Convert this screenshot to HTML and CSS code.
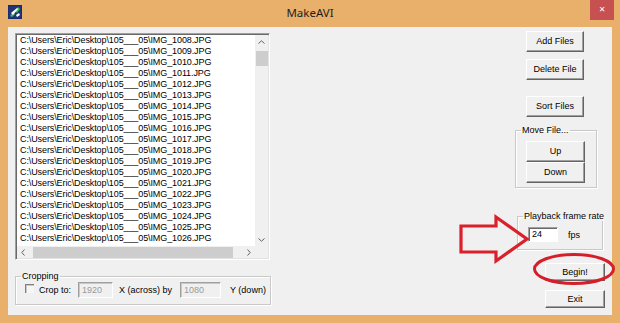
FILE: index.html
```html
<!DOCTYPE html>
<html>
<head>
<meta charset="utf-8">
<title>MakeAVI</title>
<link rel="stylesheet" href="styles.css">
</head>
<body>
<div class="window">
  <div class="titlebar">
    <svg class="app-icon" viewBox="0 0 14 14" width="14" height="14">
      <rect x="0" y="0" width="14" height="14" fill="#1c2a6e"/>
      <rect x="1" y="1" width="12" height="12" fill="#22337e"/>
      <path d="M2 11 L5 7 L7 9 L4 12 Z" fill="#3fbf4a"/>
      <path d="M7 6 L10 2 L12 4 L9 8 Z" fill="#3fbf4a"/>
      <path d="M3 8 L9 3 L10 4 L5 10 Z" fill="#ffffff"/>
      <path d="M8 10 L11 8 L12 10 L9 12 Z" fill="#ffffff"/>
    </svg>
    <div class="title">MakeAVI</div>
    <div class="close">&#x2715;</div>
  </div>
  <div class="client">
    <div class="left">
      <div class="listbox">
        <div class="list">
          <div class="row">C:\Users\Eric\Desktop\105___05\IMG_1008.JPG</div>
          <div class="row">C:\Users\Eric\Desktop\105___05\IMG_1009.JPG</div>
          <div class="row">C:\Users\Eric\Desktop\105___05\IMG_1010.JPG</div>
          <div class="row">C:\Users\Eric\Desktop\105___05\IMG_1011.JPG</div>
          <div class="row">C:\Users\Eric\Desktop\105___05\IMG_1012.JPG</div>
          <div class="row">C:\Users\Eric\Desktop\105___05\IMG_1013.JPG</div>
          <div class="row">C:\Users\Eric\Desktop\105___05\IMG_1014.JPG</div>
          <div class="row">C:\Users\Eric\Desktop\105___05\IMG_1015.JPG</div>
          <div class="row">C:\Users\Eric\Desktop\105___05\IMG_1016.JPG</div>
          <div class="row">C:\Users\Eric\Desktop\105___05\IMG_1017.JPG</div>
          <div class="row">C:\Users\Eric\Desktop\105___05\IMG_1018.JPG</div>
          <div class="row">C:\Users\Eric\Desktop\105___05\IMG_1019.JPG</div>
          <div class="row">C:\Users\Eric\Desktop\105___05\IMG_1020.JPG</div>
          <div class="row">C:\Users\Eric\Desktop\105___05\IMG_1021.JPG</div>
          <div class="row">C:\Users\Eric\Desktop\105___05\IMG_1022.JPG</div>
          <div class="row">C:\Users\Eric\Desktop\105___05\IMG_1023.JPG</div>
          <div class="row">C:\Users\Eric\Desktop\105___05\IMG_1024.JPG</div>
          <div class="row">C:\Users\Eric\Desktop\105___05\IMG_1025.JPG</div>
          <div class="row">C:\Users\Eric\Desktop\105___05\IMG_1026.JPG</div>
        </div>
        <div class="vscroll">
          <svg class="arrow" viewBox="0 0 7 4" width="7" height="4"><path d="M0.5 3.5 L3.5 0.8 L6.5 3.5" fill="none" stroke="#606060" stroke-width="1"/></svg>
          <div class="vthumb"></div>
          <div class="spacer"></div>
          <svg class="arrow" viewBox="0 0 7 4" width="7" height="4"><path d="M0.5 0.5 L3.5 3.2 L6.5 0.5" fill="none" stroke="#606060" stroke-width="1"/></svg>
        </div>
        <div class="hscroll">
          <svg class="arrow" viewBox="0 0 4 7" width="4" height="7"><path d="M3.5 0.5 L0.8 3.5 L3.5 6.5" fill="none" stroke="#606060" stroke-width="1"/></svg>
          <div class="hthumb"></div>
          <svg class="arrow" viewBox="0 0 4 7" width="4" height="7"><path d="M0.5 0.5 L3.2 3.5 L0.5 6.5" fill="none" stroke="#606060" stroke-width="1"/></svg>
        </div>
        <div class="corner"></div>
      </div>
      <fieldset class="group crop">
        <legend>Cropping</legend>
        <div class="crop-row">
          <span class="check"></span>
          <span class="lbl-crop">Crop to:</span>
          <span class="field disabled w35">1920</span>
          <span class="lbl-x">X (across) by</span>
          <span class="field disabled w41">1080</span>
          <span class="lbl-y">Y (down)</span>
        </div>
      </fieldset>
    </div>
    <div class="right">
      <div class="btn btn-top">Add Files</div>
      <div class="btn btn-del">Delete File</div>
      <div class="btn btn-sort">Sort Files</div>
      <fieldset class="group move">
        <legend>Move File...</legend>
        <div class="btn btn-move">Up</div>
        <div class="btn btn-move">Down</div>
      </fieldset>
      <fieldset class="group rate">
        <legend>Playback frame rate</legend>
        <div class="rate-row">
          <span class="field w30">24</span>
          <span class="fps">fps</span>
        </div>
      </fieldset>
      <div class="btn btn-small btn-begin">Begin!</div>
      <div class="btn btn-small btn-exit">Exit</div>
    </div>
  </div>
  <svg class="annot" viewBox="0 0 620 323" width="620" height="323">
    <path d="M461 226 L496 226 L496 217 L527 239 L496 261 L496 252 L461 252 Z" fill="none" stroke="#d9202b" stroke-width="3.2" stroke-linejoin="miter"/>
    <ellipse cx="574" cy="269" rx="39.5" ry="14.5" fill="none" stroke="#d41f2a" stroke-width="3"/>
  </svg>
</div>
</body>
</html>
```

FILE: styles.css
```css
html, body {
  margin: 0;
  padding: 0;
}
body {
  width: 620px;
  height: 323px;
  overflow: hidden;
  background: #e8b06a;
  font-family: "Liberation Sans", Arial, sans-serif;
  font-size: 9px;
  color: #000;
}
.window {
  position: relative;
  width: 620px;
  height: 323px;
  background: #e8b06a;
  display: flex;
  flex-direction: column;
}
.titlebar {
  height: 27px;
  display: flex;
  align-items: flex-start;
}
.app-icon {
  margin: 5px 0 0 8px;
  flex: none;
}
.title {
  flex: 1;
  text-align: center;
  padding-left: 8px;
  font-family: "Noto Sans", "Open Sans", sans-serif;
  font-size: 11.5px;
  line-height: 25px;
  color: #1e1e1e;
}
.close {
  width: 24px;
  height: 20px;
  margin-right: 6px;
  background: #c75050;
  color: #fff;
  font-family: "DejaVu Sans", sans-serif;
  font-size: 8px;
  font-weight: bold;
  line-height: 20px;
  text-align: center;
}
.client {
  margin: 0 8px;
  height: 288px;
  background: #f0f0f0;
  display: flex;
  justify-content: space-between;
  padding: 0 7px;
}
.left {
  width: 256px;
  padding-top: 6px;
  display: flex;
  flex-direction: column;
}
.listbox {
  width: 255px;
  height: 227px;
  box-sizing: border-box;
  border: 1px solid;
  border-color: #a0a0a0 #ffffff #ffffff #a0a0a0;
  box-shadow: inset 1px 1px 0 #696969, inset -1px -1px 0 #e3e3e3;
  background: #fff;
  display: grid;
  grid-template-columns: 1fr 13px;
  grid-template-rows: 1fr 12px;
  padding: 1px;
}
.list {
  padding-left: 3px;
  overflow: hidden;
}
.row {
  height: 11px;
  line-height: 11px;
  white-space: nowrap;
  letter-spacing: -0.1px;
}
.vscroll {
  background: #f0f0f0;
  display: flex;
  flex-direction: column;
  align-items: center;
  padding: 5px 0 4px;
}
.vthumb {
  width: 12px;
  height: 15px;
  margin-top: 7px;
  background: #cdcdcd;
}
.spacer {
  flex: 1;
}
.hscroll {
  background: #f0f0f0;
  display: flex;
  align-items: center;
  padding: 0 4px;
}
.hthumb {
  height: 11px;
  width: 200px;
  margin-left: 8px;
  margin-right: auto;
  background: #cdcdcd;
}
.corner {
  background: #f0f0f0;
}
.arrow {
  display: block;
  flex: none;
}
.group {
  margin: 0;
  border: 1px solid #c9c9c9;
  box-shadow: 1px 1px 0 #fff, inset 1px 1px 0 #fff;
  padding: 0;
  min-width: 0;
}
.group legend {
  padding: 0 1px;
  margin-left: 5px;
  line-height: 10px;
  height: 10px;
  white-space: nowrap;
}
.crop {
  margin-top: 11px;
  width: 256px;
  box-sizing: border-box;
  padding: 1px 0 6px 0;
}
.crop-row {
  display: flex;
  align-items: center;
  height: 16px;
  padding-left: 9px;
}
.check {
  width: 9px;
  height: 9px;
  box-sizing: border-box;
  border-top: 1px solid #808080;
  border-left: 1px solid #808080;
  box-shadow: inset 1px 1px 0 #c8c8c8;
  background: #f6f6f6;
  margin-right: 5px;
  margin-top: -3px;
}
.lbl-crop { margin-right: 7px; }
.lbl-x { margin: 0 8px 0 6px; }
.lbl-y { margin-left: 9px; }
.field {
  height: 16px;
  box-sizing: border-box;
  border: 1px solid;
  border-color: #a0a0a0 #ffffff #ffffff #a0a0a0;
  box-shadow: inset 1px 1px 0 #696969;
  background: #fff;
  padding: 2px 0 0 3px;
  line-height: 11px;
}
.field.disabled {
  background: #f0f0f0;
  color: #9a9a9a;
  box-shadow: inset 1px 1px 0 #c8c8c8;
}
.w35 { width: 35px; }
.w41 { width: 41px; }
.w30 { width: 30px; height: 15px; padding-top: 1px; }
.right {
  width: 90px;
  display: flex;
  flex-direction: column;
}
.btn {
  box-sizing: border-box;
  width: 58px;
  height: 21px;
  background: #f0f0f0;
  border: 1px solid;
  border-color: #ffffff #646464 #646464 #ffffff;
  box-shadow: inset -1px -1px 0 #a0a0a0;
  text-align: center;
  line-height: 19px;
  flex: none;
}
.btn-top { margin: 4px 0 0 11px; }
.btn-del { margin: 7px 0 0 11px; }
.btn-sort { margin: 16px 0 0 11px; }
.move {
  margin-top: 8px;
  width: 82px;
  box-sizing: border-box;
  padding: 6px 0 4px 0;
}
.btn-move {
  width: 59px;
  margin-left: 10px;
}
.rate {
  margin: 23px 0 0 2px;
  width: 86px;
  box-sizing: border-box;
  padding: 6px 0 7px 0;
}
.rate-row {
  display: flex;
  align-items: center;
  padding-left: 10px;
}
.fps {
  margin-left: 10px;
}
.btn-small {
  width: 60px;
  height: 18px;
  line-height: 16px;
  margin-left: 30px;
}
.btn-begin { margin-top: 13px; }
.btn-exit { margin-top: 9px; }
.annot {
  position: absolute;
  left: 0;
  top: 0;
  pointer-events: none;
}
```
